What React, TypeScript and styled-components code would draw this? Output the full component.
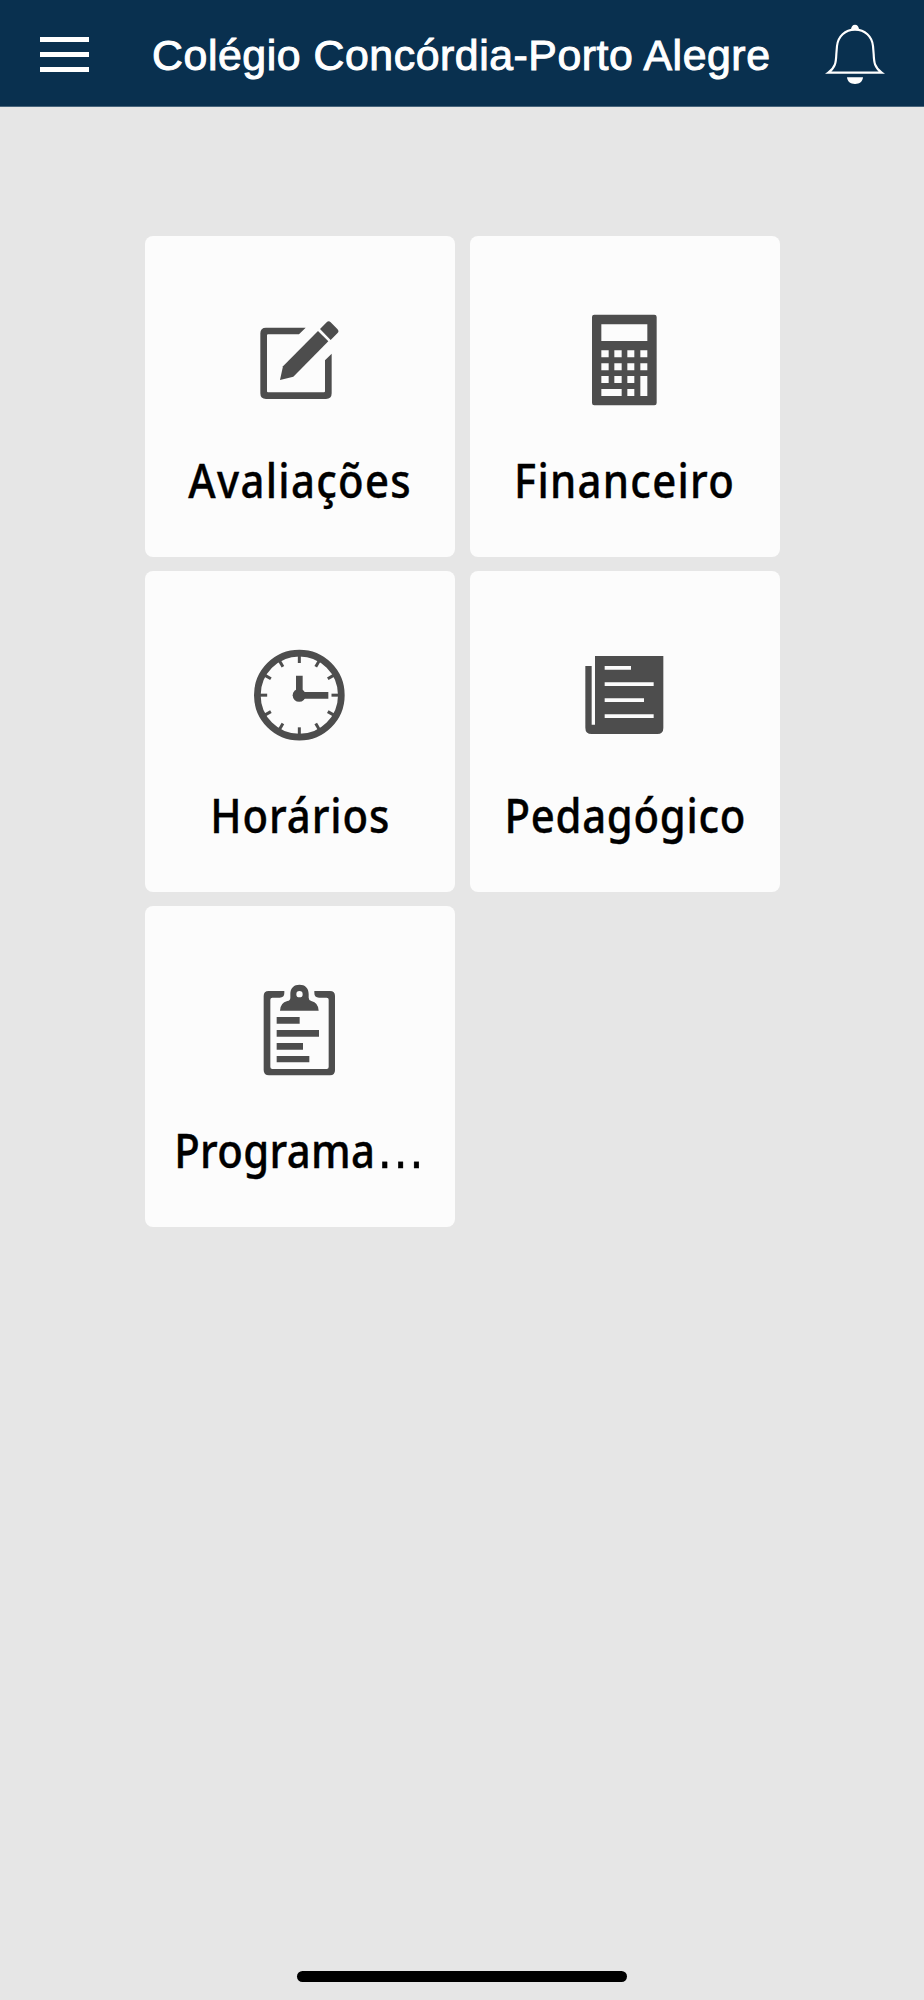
import React from 'react';
import styled, { createGlobalStyle } from 'styled-components';

const GlobalStyle = createGlobalStyle`
  * { box-sizing: border-box; }
  body { margin: 0; background: #e6e6e6; }
`;

const Screen = styled.div`
  display: flex;
  flex-direction: column;
  width: 924px;
  height: 2000px;
  overflow: hidden;
  background: #e6e6e6;
`;

const Header = styled.header`
  display: flex;
  align-items: center;
  flex: none;
  height: 107px;
  padding: 0 40px;
  background: #09304f;
  border-bottom: 1px solid #48657c;
`;

const MenuButton = styled.button`
  display: flex;
  flex-direction: column;
  gap: 10px;
  width: 49px;
  margin: 3px 0 0;
  padding: 0;
  border: 0;
  background: none;
`;

const MenuLine = styled.span`
  height: 5px;
  background: #fff;
`;

const Title = styled.h1`
  flex: 1;
  margin: 3px 0 0;
  padding-left: 8.6px;
  text-align: center;
  white-space: nowrap;
  color: #fff;
  font: 400 42.8px/50px 'Liberation Sans', Arial, sans-serif;
  letter-spacing: 0.55px;
  -webkit-text-stroke: 1px #fff;
`;

const BellButton = styled.button`
  width: 60px;
  height: 64px;
  margin: 1.5px -1px 0 0;
  padding: 0;
  border: 0;
  background: none;

  svg { display: block; }
`;

const Grid = styled.main`
  display: grid;
  grid-template-columns: 310px 310px;
  grid-auto-rows: 320.6px;
  gap: 14.4px 15px;
  padding: 129.2px 0 0 145px;
`;

const Card = styled.a`
  display: flex;
  flex-direction: column;
  align-items: center;
  padding-top: 64px;
  border-radius: 8px;
  background: #fcfcfc;
`;

const CardIcon = styled.svg`
  flex: none;
  width: 120px;
  height: 120px;
  fill: #4d4d4d;
`;

const Label = styled.span<{ $spacing: number }>`
  margin-top: 29.5px;
  white-space: nowrap;
  color: #000;
  font: 500 47.6px/60px 'Noto Sans', 'Open Sans', sans-serif;
  letter-spacing: ${(p) => p.$spacing}px;
  -webkit-text-stroke: 0.4px #000;
  transform: scaleX(0.88);
`;

const Ellipsis = styled.span`
  font: 400 57px/0 'Liberation Sans', Arial, sans-serif;
`;

const HomeBar = styled.div`
  width: 330px;
  height: 11px;
  margin: auto auto 18px;
  border-radius: 6px;
  background: #000;
`;

const Bell = () => (
  <svg width="60" height="64" viewBox="0 0 180 192" fill="none">
    <path
      d="M10 152H170C149 137 147 122 146 96L144 72C141 43 120 23 90 23C60 23 39 43 36 72L34 96C33 122 31 137 10 152Z"
      stroke="#fff"
      strokeWidth="6.5"
    />
    <path d="M78 22C79 13 83 8 90 8S101 13 102 22Z" fill="#fff" />
    <path d="M66 166H114C113 179 104 186 90 186S67 179 66 166Z" fill="#fff" />
  </svg>
);

const EditIcon = () => (
  <CardIcon viewBox="0 0 360 360">
    <path d="M78 83H197L177 103H84Q81 103 81 106V274Q81 277 84 277H252Q255 277 255 274V181L275 161V280Q275 297 258 297H78Q61 297 61 280V100Q61 83 78 83Z" />
    <path d="M234 93L265 124L160 230L120 240L129 199Z" />
    <path d="M240 87L260 67Q266 61 272 67L292 87Q299 94 292 100L272 120Z" />
  </CardIcon>
);

const CalculatorIcon = () => (
  <CardIcon viewBox="-15 0 360 360">
    <path
      fillRule="evenodd"
      d="M73 44H253Q260 44 260 51V309Q260 316 253 316H73Q66 316 66 309V51Q66 44 73 44ZM94 73V123H232V73ZM94 151V172H116V151ZM133 151V172H155V151ZM172 151V172H193V151ZM211 151V172H232V151ZM94 190V211H116V190ZM133 190V211H155V190ZM172 190V211H193V190ZM211 190V211H232V190ZM94 228V249H116V228ZM133 228V249H155V228ZM172 228V249H193V228ZM211 228V288H232V228ZM94 267V288H155V267ZM172 267V288H193V267Z"
    />
  </CardIcon>
);

const ClockIcon = () => (
  <CardIcon viewBox="0 0 360 360">
    <circle cx="178" cy="180.500" r="126" fill="none" stroke="#4d4d4d" strokeWidth="20" />
    {Array.from({ length: 12 }, (_, i) => (
      <rect key={i} x="173.500" y="62" width="9" height={i % 3 ? 20 : 22} transform={`rotate(${i * 30} 178 180.500)`} />
    ))}
    <path d="M168 122H188V171H265V191H188L168 180Z" />
    <circle cx="177.500" cy="181" r="19.500" />
  </CardIcon>
);

const NotebookIcon = () => (
  <CardIcon viewBox="-15 -15 360 360">
    <path
      fillRule="evenodd"
      d="M75 48H280V264Q280 282 262 282H65Q46 282 46 263V78H65V254H75ZM104 78V89H183V78ZM104 127V138H251V127ZM104 175V186H222V175ZM104 223V234H251V223Z"
    />
  </CardIcon>
);

const ClipboardIcon = () => (
  <CardIcon viewBox="0 0 360 360">
    <path d="M86 63H133V69Q133 83 119 83H97Q91 83 91 89V291Q91 297 97 297H260Q266 297 266 291V89Q266 83 260 83H237Q223 83 223 69V63H270Q285 63 285 78V301Q285 316 270 316H87Q71 316 71 300V78Q71 63 86 63Z" />
    <path
      fillRule="evenodd"
      d="M151 72C151 54 162 44 178.500 44S206 54 206 72V83Q206 91 214 93Q235 98 236 122H120Q121 98 142 93Q151 91 151 83ZM178.500 63A9.500 9.500 0 1 0 178.500 82A9.500 9.500 0 1 0 178.500 63Z"
    />
    <path d="M110 141H179V161H110ZM110 180H237V200H110ZM110 219H189V239H110ZM110 258H208V277H110Z" />
  </CardIcon>
);

const items = [
  { label: 'Avaliações', Icon: EditIcon, spacing: 1.5 },
  { label: 'Financeiro', Icon: CalculatorIcon, spacing: 1.45 },
  { label: 'Horários', Icon: ClockIcon, spacing: 1.05 },
  { label: 'Pedagógico', Icon: NotebookIcon, spacing: 0.8 },
  { label: 'Programa', Icon: ClipboardIcon, spacing: 0.4, truncated: true },
];

export default function App() {
  return (
    <Screen>
      <GlobalStyle />
      <Header>
        <MenuButton aria-label="Menu">
          <MenuLine />
          <MenuLine />
          <MenuLine />
        </MenuButton>
        <Title>Colégio Concórdia-Porto Alegre</Title>
        <BellButton aria-label="Notificações">
          <Bell />
        </BellButton>
      </Header>
      <Grid>
        {items.map(({ label, Icon, spacing, truncated }) => (
          <Card key={label}>
            <Icon />
            <Label $spacing={spacing}>
              {label}
              {truncated && <Ellipsis>…</Ellipsis>}
            </Label>
          </Card>
        ))}
      </Grid>
      <HomeBar />
    </Screen>
  );
}
